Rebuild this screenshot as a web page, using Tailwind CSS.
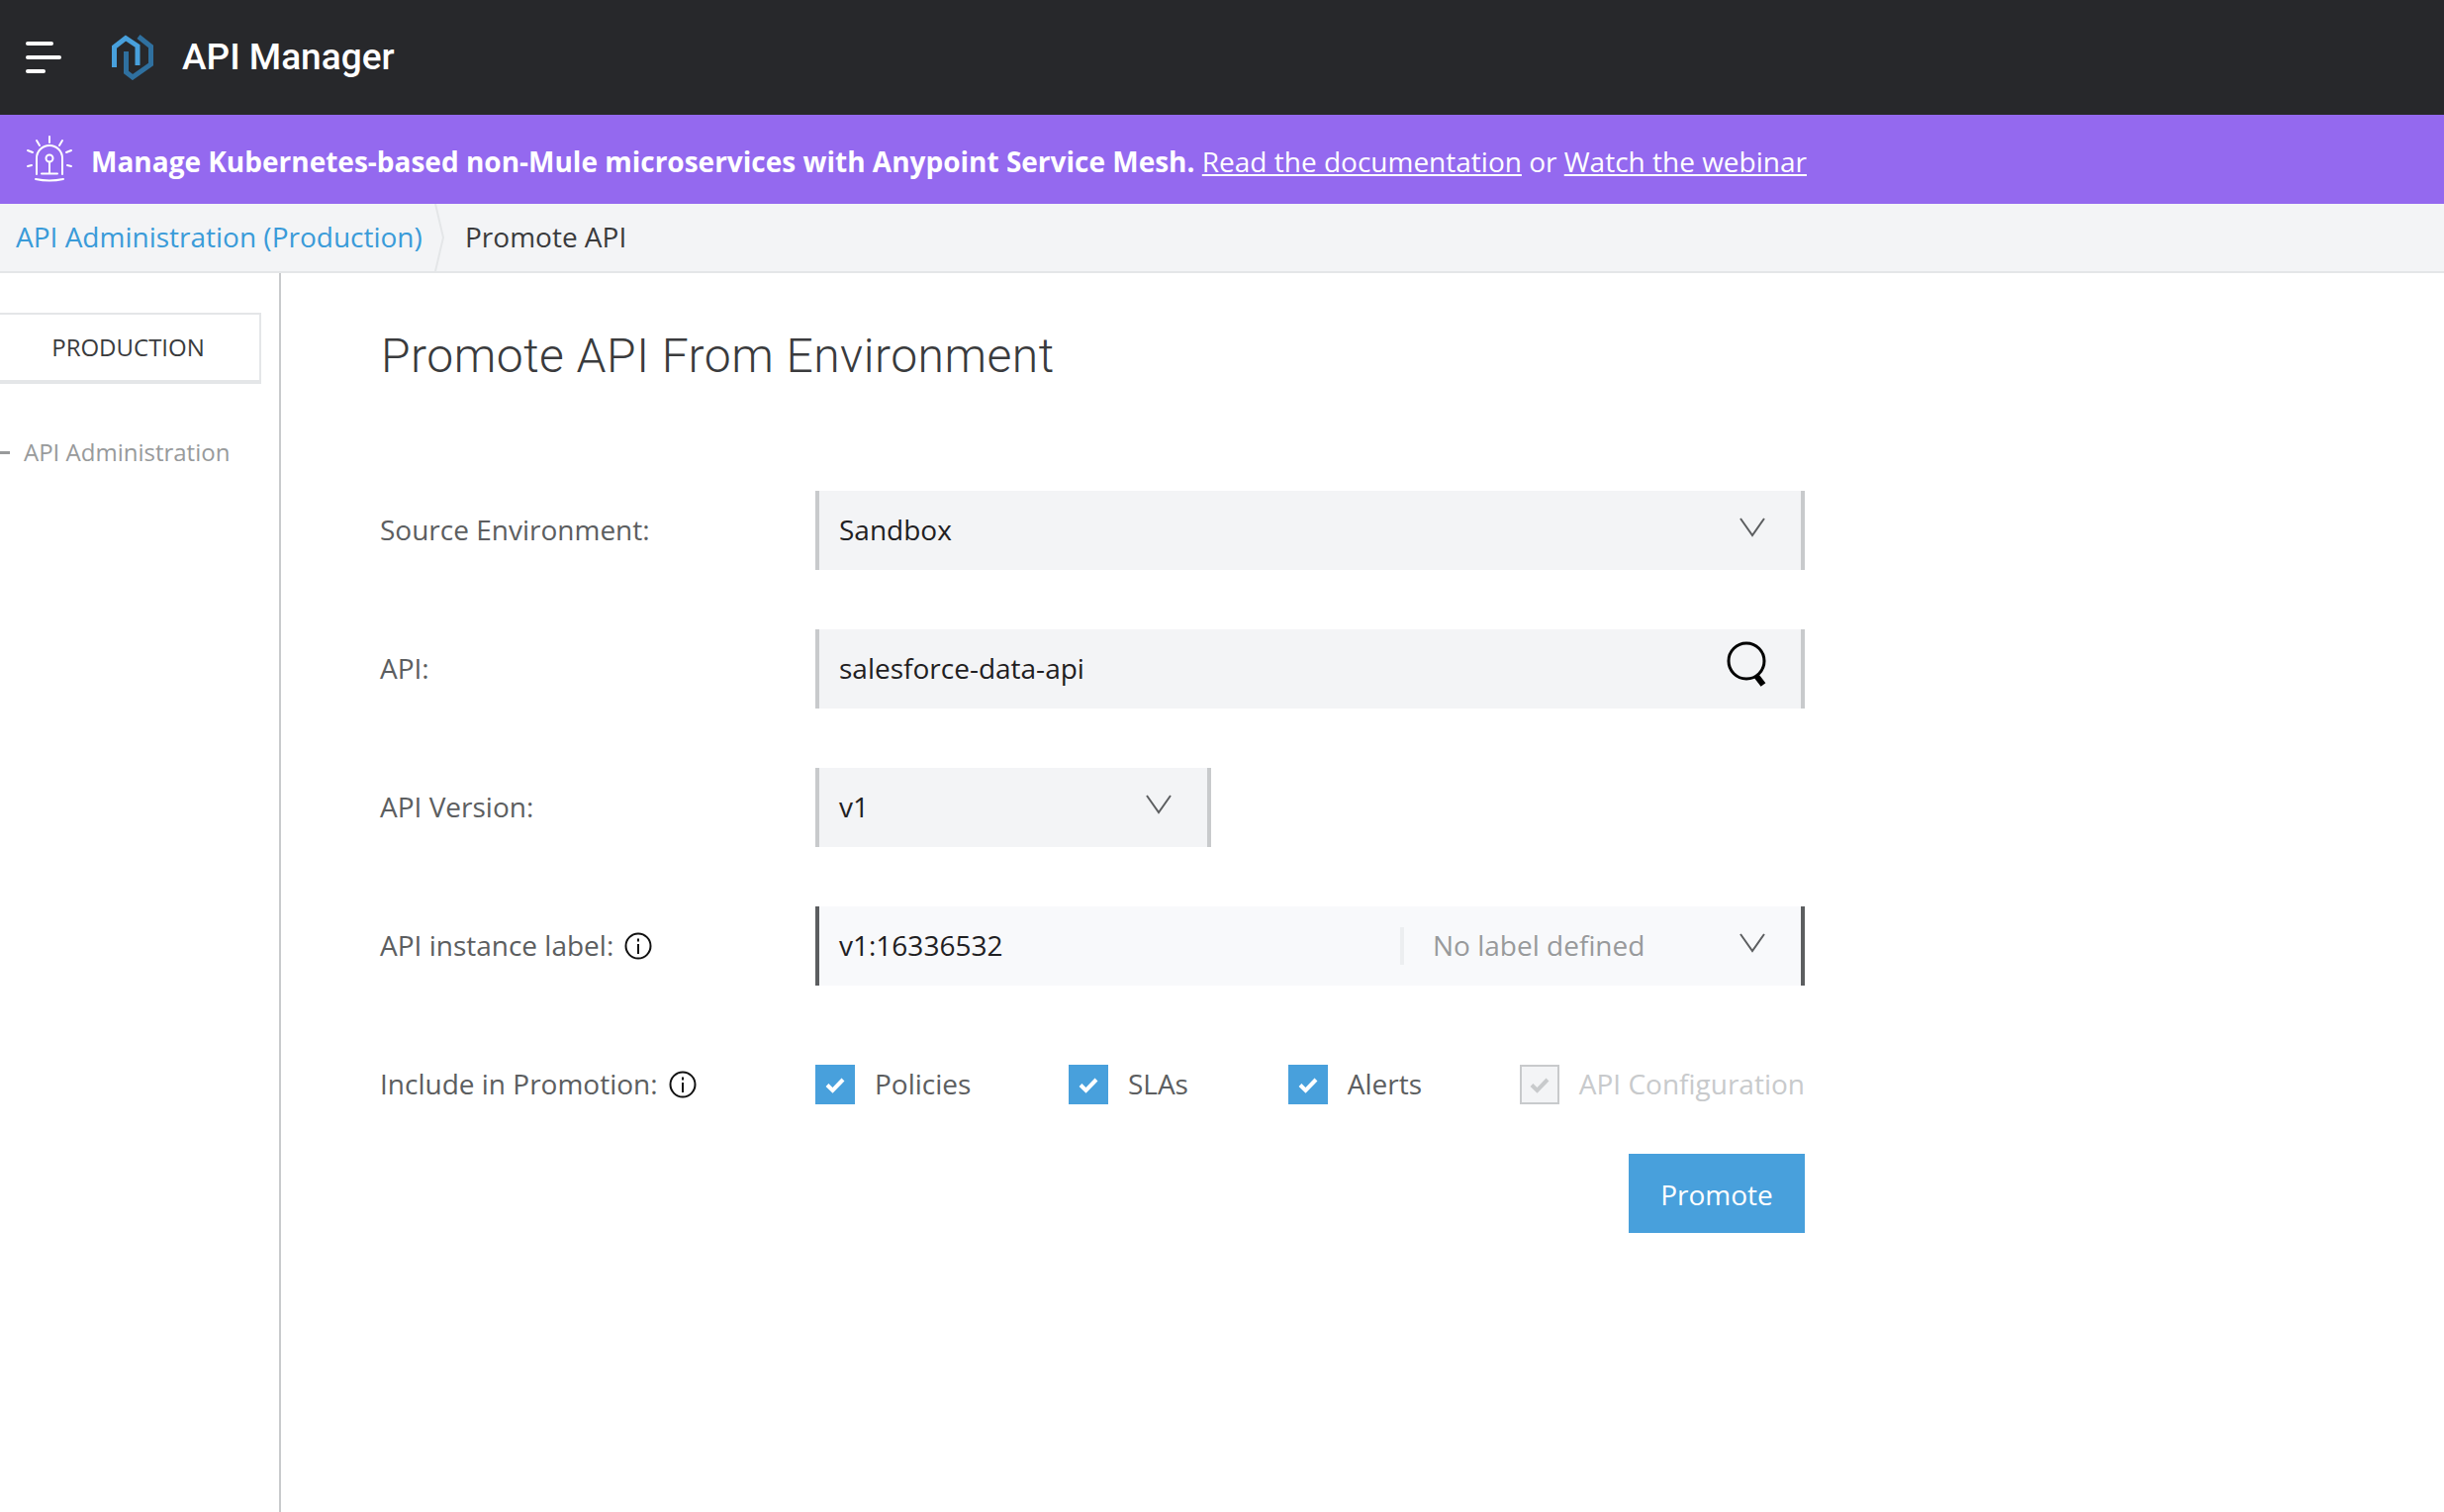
<!DOCTYPE html>
<html lang="en">
<head>
    <meta charset="UTF-8">
    <title>API Manager</title>
    <script src="https://cdn.jsdelivr.net/npm/@tailwindcss/browser@4"></script>
</head>
<body class="bg-white font-['Open_Sans',sans-serif] h-[1528px] overflow-hidden flex flex-col">
    <!-- Top bar -->
    <header class="h-[116px] bg-[#27282b] flex items-center shrink-0">
        <div class="ml-[26px] w-[36px] flex flex-col gap-[10px]">
            <span class="block h-[4px] w-[28px] rounded-full bg-white"></span>
            <span class="block h-[4px] w-[36px] rounded-full bg-white"></span>
            <span class="block h-[4px] w-[20px] rounded-full bg-white"></span>
        </div>
        <svg class="ml-[51px]" width="42" height="46" viewBox="0 0 42 46" fill="none" stroke-width="5">
            <path d="M14.500 17V38L21 43L39.500 30V12L27 2" stroke="#2f709f"/>
            <path d="M2.500 33V12.500L14 3.500L26 11.500V31" stroke="#48a0dc"/>
        </svg>
        <span class="ml-[29px] text-white text-[37px] font-medium font-['Roboto',sans-serif]">API Manager</span>
    </header>

    <!-- Banner -->
    <div class="h-[90px] bg-[#9469ef] flex items-center shrink-0 text-white text-[28px]">
        <svg class="ml-[26px]" width="48" height="48" viewBox="0 0 48 48" fill="none" stroke="white" stroke-width="2" stroke-linecap="round">
            <path d="M24 1v6M11 5l3 5M37 5l-3 5M2 15l5 2M46 15l-5 2M2 31l4-1M46 31l-4-1"/>
            <path d="M11 39V23a13 13 0 0 1 26 0v16"/>
            <circle cx="24" cy="23" r="3.500"/>
            <path d="M24 27v11M16 38.500h16M10 44q14 3 28 0"/>
        </svg>
        <p class="ml-[18px] pt-[3px] whitespace-nowrap"><b>Manage Kubernetes-based non-Mule microservices with Anypoint Service Mesh.</b> <a class="underline">Read the documentation</a> or <a class="underline">Watch the webinar</a></p>
    </div>

    <!-- Breadcrumb -->
    <nav class="h-[70px] pb-[2px] bg-[#f3f4f6] border-b-2 border-[#e4e6e8] flex items-center shrink-0 text-[28px] relative">
        <a class="ml-[16px] w-[454px] text-[#3a9bd9]">API Administration (Production)</a>
        <svg class="absolute left-[438px] top-0" width="12" height="68" viewBox="0 0 12 68" fill="none"><path d="M2 0l8 34l-8 34" stroke="#e4e6e8" stroke-width="2"/></svg>
        <span class="text-[#3a3b3d]">Promote API</span>
    </nav>

    <div class="flex flex-1 min-h-0">
        <!-- Sidebar -->
        <aside class="w-[284px] border-r-2 border-[#c8cacc] shrink-0 pt-[40px]">
            <div class="w-[264px] h-[72px] pr-[3px] border-2 border-l-0 border-b-4 border-[#e4e6e8] flex items-center justify-center text-[24px] text-[#3a3b3d]">PRODUCTION</div>
            <div class="mt-[51px] flex items-center text-[24px] text-[#989a9b]">
                <span class="block w-[10px] h-[3px] bg-[#989a9b]"></span>
                <span class="ml-[14px]">API Administration</span>
            </div>
        </aside>

        <!-- Main form -->
        <main class="pl-[100px] w-[1640px]">
            <h1 class="h-[220px] pt-[60px] pl-[1px] text-[48px] leading-[48px] tracking-[0.5px] font-light text-[#3a3b3d] font-['Roboto',sans-serif]">Promote API From Environment</h1>

            <div class="flex items-center h-[80px] mb-[60px]">
                <label class="w-[440px] pb-[2px] text-[28px] text-[#5c5e60]">Source Environment:</label>
                <div class="w-[1000px] h-[80px] bg-[#f3f4f6] border-x-4 border-[#c8cacc] flex items-center justify-between pl-[20px] pr-[36px] text-[28px] text-[#1f2022]">
                    <span class="pb-[2px]">Sandbox</span>
                    <svg class="mb-[6px]" width="26" height="20" viewBox="0 0 26 20" fill="none"><path d="M1 1l12 17L25 1" stroke="#5c5e60" stroke-width="2"/></svg>
                </div>
            </div>

            <div class="flex items-center h-[80px] mb-[60px]">
                <label class="w-[440px] pb-[2px] text-[28px] text-[#5c5e60]">API:</label>
                <div class="w-[1000px] h-[80px] bg-[#f3f4f6] border-x-4 border-[#c8cacc] flex items-center justify-between pl-[20px] pr-[35px] text-[28px] text-[#1f2022]">
                    <span class="pb-[2px]">salesforce-data-api</span>
                    <svg class="mb-[10px]" width="40" height="46" viewBox="0 0 40 46" fill="none"><circle cx="20" cy="20" r="18" stroke="black" stroke-width="3"/><path d="M30 35l7 9" stroke="black" stroke-width="6"/></svg>
                </div>
            </div>

            <div class="flex items-center h-[80px] mb-[60px]">
                <label class="w-[440px] pb-[2px] text-[28px] text-[#5c5e60]">API Version:</label>
                <div class="w-[400px] h-[80px] bg-[#f3f4f6] border-x-4 border-[#c8cacc] flex items-center justify-between pl-[20px] pr-[36px] text-[28px] text-[#1f2022]">
                    <span class="pb-[2px]">v1</span>
                    <svg class="mb-[6px]" width="26" height="20" viewBox="0 0 26 20" fill="none"><path d="M1 1l12 17L25 1" stroke="#5c5e60" stroke-width="2"/></svg>
                </div>
            </div>

            <div class="flex items-center h-[80px] mb-[60px]">
                <label class="w-[440px] text-[28px] text-[#5c5e60] flex items-center gap-[11px]"><span class="pb-[2px]">API instance label:</span>
                    <svg width="28" height="28" viewBox="0 0 28 28" fill="none" stroke="#111" stroke-width="2"><circle cx="14" cy="14" r="12.500"/><path d="M14 12v10"/><path d="M14 6.500v3"/></svg>
                </label>
                <div class="w-[1000px] h-[80px] bg-[#f8f9fb] border-x-4 border-[#5c5e60] flex items-center pl-[20px] pr-[36px] text-[28px] text-[#1f2022]">
                    <span class="w-[567px] pb-[2px]">v1:16336532</span>
                    <span class="block w-[4px] h-[38px] bg-[#eceef0]"></span>
                    <span class="ml-[29px] pb-[2px] text-[#989a9b] flex-1">No label defined</span>
                    <svg class="mb-[6px]" width="26" height="20" viewBox="0 0 26 20" fill="none"><path d="M1 1l12 17L25 1" stroke="#5c5e60" stroke-width="2"/></svg>
                </div>
            </div>

            <div class="flex items-center h-[80px]">
                <label class="w-[440px] text-[28px] text-[#5c5e60] flex items-center gap-[11px]"><span class="pb-[2px]">Include in Promotion:</span>
                    <svg width="28" height="28" viewBox="0 0 28 28" fill="none" stroke="#111" stroke-width="2"><circle cx="14" cy="14" r="12.500"/><path d="M14 12v10"/><path d="M14 6.500v3"/></svg>
                </label>
                <div class="w-[1000px] flex items-center text-[28px] text-[#5c5e60] whitespace-nowrap">
                    <div class="w-[256px] flex items-center gap-[20px]">
                        <span class="w-[40px] h-[40px] bg-[#48a0dc] flex items-center justify-center pt-[2px]"><svg width="20" height="16" viewBox="0 0 20 16" fill="none"><path d="M2 7.500l5.500 5.500L18 2" stroke="white" stroke-width="4"/></svg></span>
                        <span class="pb-[2px]">Policies</span>
                    </div>
                    <div class="w-[222px] flex items-center gap-[20px]">
                        <span class="w-[40px] h-[40px] bg-[#48a0dc] flex items-center justify-center pt-[2px]"><svg width="20" height="16" viewBox="0 0 20 16" fill="none"><path d="M2 7.500l5.500 5.500L18 2" stroke="white" stroke-width="4"/></svg></span>
                        <span class="pb-[2px]">SLAs</span>
                    </div>
                    <div class="w-[234px] flex items-center gap-[20px]">
                        <span class="w-[40px] h-[40px] bg-[#48a0dc] flex items-center justify-center pt-[2px]"><svg width="20" height="16" viewBox="0 0 20 16" fill="none"><path d="M2 7.500l5.500 5.500L18 2" stroke="white" stroke-width="4"/></svg></span>
                        <span class="pb-[2px]">Alerts</span>
                    </div>
                    <div class="flex items-center gap-[20px] text-[#c8cacc]">
                        <span class="w-[40px] h-[40px] bg-[#f3f4f6] border-2 border-[#c8cacc] flex items-center justify-center pt-[2px]"><svg width="20" height="16" viewBox="0 0 20 16" fill="none"><path d="M2 7.500l5.500 5.500L18 2" stroke="#c8cacc" stroke-width="4"/></svg></span>
                        <span class="pb-[2px]">API Configuration</span>
                    </div>
                </div>
            </div>

            <div class="w-[1440px] flex justify-end mt-[30px]">
                <button class="w-[178px] h-[80px] pt-[2px] bg-[#48a0dc] text-white text-[28px]">Promote</button>
            </div>
        </main>
    </div>
</body>
</html>
